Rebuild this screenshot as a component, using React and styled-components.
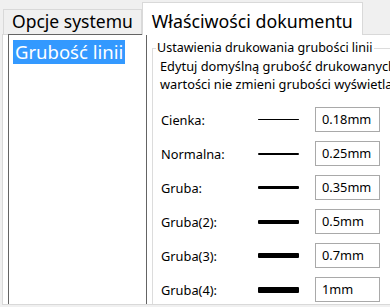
import React from "react";
import styled, { createGlobalStyle } from "styled-components";

const Global = createGlobalStyle`
  html, body { margin: 0; padding: 0; background: #f0f0f0; }
  body { font-family: "Noto Sans", "Open Sans", sans-serif; color: #000; }
`;

const Window = styled.div`
  width: 390px;
  height: 305px;
  overflow: hidden;
  display: flex;
  flex-direction: column;
  background: #f0f0f0;
`;

const TabStrip = styled.div`
  height: 34px;
  display: flex;
  align-items: flex-end;
  padding-left: 3px;
  position: relative;
  z-index: 2;
  flex-shrink: 0;
`;

const Tab = styled.div`
  box-sizing: border-box;
  height: ${(p) => (p.$active ? "33px" : "25px")};
  margin-bottom: ${(p) => (p.$active ? "-1px" : "0")};
  padding: ${(p) => (p.$active ? "6px 9px 0" : "0 8px")};
  border: 1px solid #d9d9d9;
  border-bottom: none;
  background: ${(p) => (p.$active ? "#ffffff" : "#f0f0f0")};
  font-size: ${(p) => (p.$active ? "17.8px" : "17.5px")};
  line-height: ${(p) => (p.$active ? "24px" : "22px")};
  white-space: nowrap;
  color: #000;
`;

const Page = styled.div`
  flex: 1;
  display: flex;
  align-items: stretch;
  margin-left: 2px;
  padding-left: 5px;
  background: #ffffff;
  border: 1px solid #d9d9d9;
  border-right: none;
  min-height: 0;
`;

const ListBox = styled.div`
  box-sizing: border-box;
  width: 139px;
  flex-shrink: 0;
  margin-top: -1px;
  padding: 5px 4px;
  border: 1px solid #646464;
  border-bottom: none;
  background: #fff;
`;

const ListItem = styled.div`
  display: inline-block;
  padding: 0 2px;
  height: 24px;
  line-height: 23px;
  font-size: 18.5px;
  background: ${(p) => (p.$selected ? "#3399ff" : "transparent")};
  color: ${(p) => (p.$selected ? "#ffffff" : "#000")};
  white-space: nowrap;
`;

const Group = styled.fieldset`
  margin: 4px 0 0 5px;
  padding: 0 0 0 7px;
  border: 1px solid #dcdcdc;
  border-bottom: none;
  width: 280px;
  flex-shrink: 0;
  min-width: 0;
`;

const Legend = styled.legend`
  padding: 0 1px;
  margin-left: -4px;
  font-size: 12.5px;
  line-height: 18px;
  white-space: nowrap;
  color: #000;
`;

const Description = styled.p`
  margin: 0;
  font-size: 12.8px;
  line-height: 18px;
  white-space: nowrap;
  color: #000;
`;

const Rows = styled.div`
  margin-top: 14px;
  display: flex;
  flex-direction: column;
  gap: 9px;
`;

const Row = styled.div`
  display: flex;
  align-items: center;
  height: 25px;
`;

const Label = styled.div`
  width: 98px;
  padding-left: 1px;
  box-sizing: border-box;
  font-size: 12.8px;
  color: #000;
  white-space: nowrap;
`;

const Sample = styled.div`
  width: 41px;
  margin-right: 16px;
  display: flex;
  align-items: center;
  height: 25px;
`;

const Stroke = styled.div`
  width: 100%;
  background: #000;
  border-radius: 1px;
`;

const ValueBox = styled.div`
  box-sizing: border-box;
  width: 65px;
  height: 25px;
  border: 1px solid #a9a9a9;
  padding-left: 6px;
  font-size: 12.8px;
  line-height: 22px;
  color: #000;
  background: #fff;
`;

const rows = [
  { label: "Cienka:", w: 1, v: "0.18mm" },
  { label: "Normalna:", w: 2, v: "0.25mm" },
  { label: "Gruba:", w: 3, v: "0.35mm" },
  { label: "Gruba(2):", w: 4, v: "0.5mm" },
  { label: "Gruba(3):", w: 5, v: "0.7mm" },
  { label: "Gruba(4):", w: 6, v: "1mm" },
];

export default function App() {
  return (
    <>
      <Global />
      <Window>
        <TabStrip>
          <Tab>Opcje systemu</Tab>
          <Tab $active>Właściwości dokumentu</Tab>
        </TabStrip>
        <Page>
          <ListBox>
            <ListItem $selected>Grubość linii</ListItem>
          </ListBox>
          <Group>
            <Legend>Ustawienia drukowania grubości linii</Legend>
            <Description>
              Edytuj domyślną grubość drukowanych linii. Zmiana tej
              <br />
              wartości nie zmieni grubości wyświetlanych linii.
            </Description>
            <Rows>
              {rows.map((r) => (
                <Row key={r.label}>
                  <Label>{r.label}</Label>
                  <Sample>
                    <Stroke style={{ height: `${r.w}px` }} />
                  </Sample>
                  <ValueBox>{r.v}</ValueBox>
                </Row>
              ))}
            </Rows>
          </Group>
        </Page>
      </Window>
    </>
  );
}
